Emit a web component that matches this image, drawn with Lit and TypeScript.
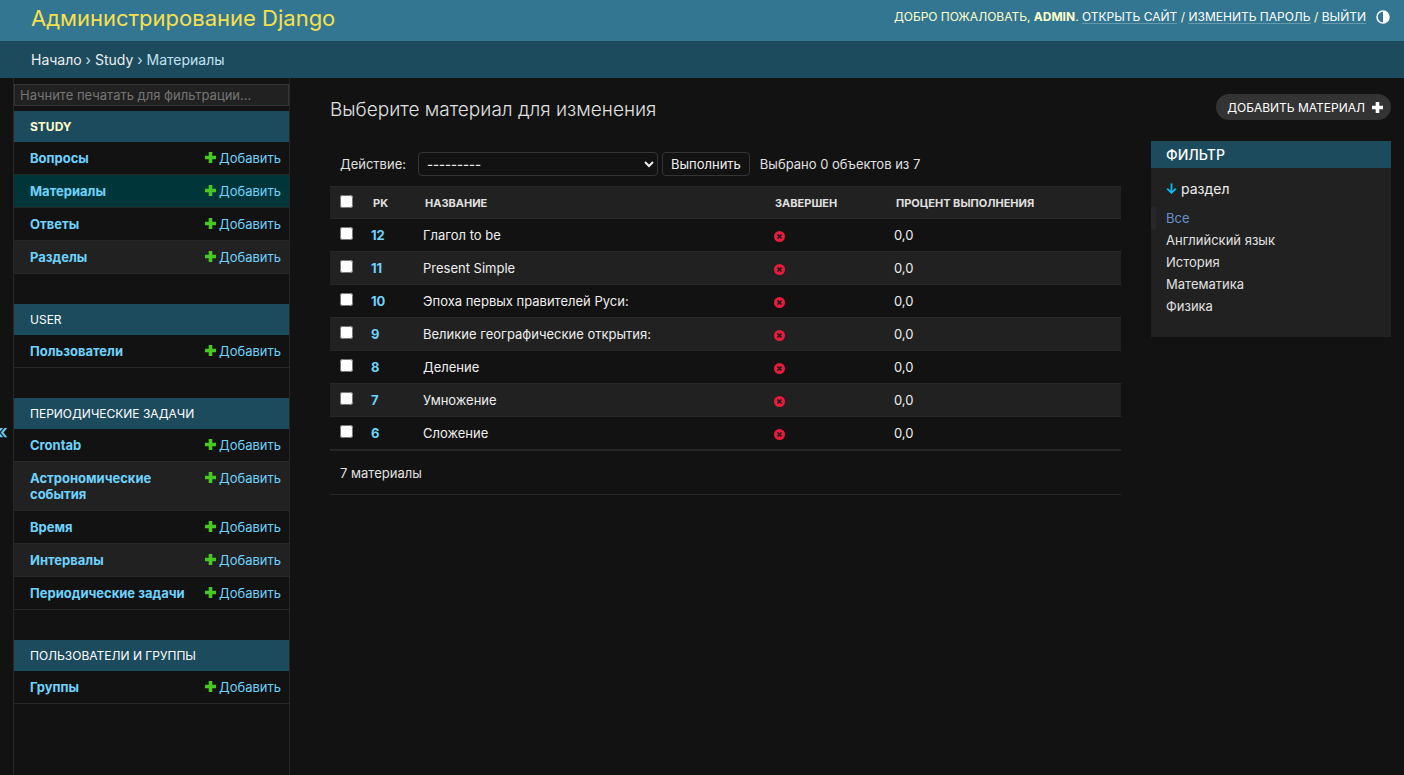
import { LitElement, html, css, svg } from "lit";
import { customElement, property } from "lit/decorators.js";
import { classMap } from "lit/directives/class-map.js";

interface Model {
  name: string;
  current?: boolean;
}

interface AppGroup {
  name: string;
  current?: boolean;
  models: Model[];
}

interface Row {
  pk: number;
  title: string;
  percent: string;
}

const GROUPS: AppGroup[] = [
  {
    name: "Study",
    current: true,
    models: [
      { name: "Вопросы" },
      { name: "Материалы", current: true },
      { name: "Ответы" },
      { name: "Разделы" },
    ],
  },
  { name: "User", models: [{ name: "Пользователи" }] },
  {
    name: "Периодические задачи",
    models: [
      { name: "Crontab" },
      { name: "Астрономические события" },
      { name: "Время" },
      { name: "Интервалы" },
      { name: "Периодические задачи" },
    ],
  },
  { name: "Пользователи и группы", models: [{ name: "Группы" }] },
];

const ROWS: Row[] = [
  { pk: 12, title: "Глагол to be", percent: "0,0" },
  { pk: 11, title: "Present Simple", percent: "0,0" },
  { pk: 10, title: "Эпоха первых правителей Руси:", percent: "0,0" },
  { pk: 9, title: "Великие географические открытия:", percent: "0,0" },
  { pk: 8, title: "Деление", percent: "0,0" },
  { pk: 7, title: "Умножение", percent: "0,0" },
  { pk: 6, title: "Сложение", percent: "0,0" },
];

const SECTIONS = ["Все", "Английский язык", "История", "Математика", "Физика"];

const plus = svg`<path d="M3.7 0h3.6v3.7H11v3.6H7.3V11H3.7V7.3H0V3.7h3.7z" fill="currentColor"/>`;

const base = css`
  :host {
    display: block;
    box-sizing: border-box;
  }
  *,
  *::before,
  *::after {
    box-sizing: border-box;
  }
  a {
    color: #6dd3fd;
    text-decoration: none;
  }
  svg {
    display: block;
    flex: none;
  }
`;

@customElement("site-header")
class SiteHeader extends LitElement {
  static styles = [
    base,
    css`
      .bar {
        display: flex;
        justify-content: space-between;
        min-height: 41px;
        padding: 0 13px 0 31px;
        background: #337691;
        color: #ffffcc;
      }
      .brand {
        margin: 0;
        padding-top: 4px;
        font-size: 22px;
        line-height: 29px;
        font-weight: 400;
      }
      .brand a {
        color: #f8e04c;
      }
      .tools {
        display: flex;
        align-items: center;
        height: 33px;
        gap: 9px;
        font-size: 12px;
        line-height: 15px;
        text-transform: uppercase;
      }
      .tools a {
        display: inline-block;
        height: 15px;
        color: #fff;
        border-bottom: 1px solid rgba(255, 255, 255, 0.25);
      }
      .theme {
        padding: 0;
        border: 0;
        background: none;
        color: #fff;
      }
      .crumbs {
        padding: 10px 31px;
        background: #1c4b5e;
        color: #c1e2f2;
        font-size: 14px;
        line-height: 17px;
      }
      .crumbs a {
        color: #eee;
      }
    `,
  ];

  render() {
    return html`
      <header class="bar">
        <h1 class="brand"><a href="#">Администрирование Django</a></h1>
        <div class="tools">
          <div>
            Добро пожаловать, <strong>admin</strong>. <a href="#">Открыть сайт</a> /
            <a href="#">Изменить пароль</a> / <a href="#">Выйти</a>
          </div>
          <button class="theme" aria-label="Переключить тему">
            <svg width="16" height="16" viewBox="0 0 16 16">
              <circle cx="8" cy="8" r="6" fill="none" stroke="currentColor" stroke-width="1.5" />
              <path d="M8 2a6 6 0 0 1 0 12z" fill="currentColor" />
            </svg>
          </button>
        </div>
      </header>
      <nav class="crumbs">
        <a href="#">Начало</a> › <a href="#">Study</a> › Материалы
      </nav>
    `;
  }
}

@customElement("nav-sidebar")
class NavSidebar extends LitElement {
  @property({ attribute: false }) groups: AppGroup[] = [];

  static styles = [
    base,
    css`
      :host {
        display: flex;
        flex: none;
        width: 290px;
      }
      .toggle {
        display: flex;
        flex: none;
        align-items: center;
        justify-content: flex-end;
        width: 14px;
        padding: 10px 5px 0 0;
        overflow: hidden;
        border: 0;
        border-right: 1px solid #272727;
        background: none;
        color: #6dd3fd;
        font: inherit;
        font-size: 20px;
        font-weight: 500;
      }
      .panel {
        flex: 1;
        padding-top: 6px;
        border-right: 1px solid #272727;
      }
      .search {
        display: block;
        width: 100%;
        height: 22px;
        margin-bottom: 5px;
        padding: 0 5px;
        border: 1px solid #353535;
        border-radius: 0;
        background: #212121;
        color: #eee;
        font: inherit;
        font-size: 13px;
      }
      .search::placeholder {
        color: #757575;
      }
      table {
        width: 100%;
        margin-bottom: 30px;
        border-collapse: collapse;
      }
      caption {
        padding: 8px 16px;
        background: #1c4b5e;
        font-size: 12px;
        line-height: 15px;
        text-align: left;
        text-transform: uppercase;
      }
      caption a {
        color: #fff;
      }
      .active caption a {
        color: #ffffcc;
        font-weight: 700;
      }
      th,
      td {
        padding: 8px;
        border-bottom: 1px solid #272727;
        font-size: 13px;
        line-height: 16px;
        vertical-align: top;
        text-align: left;
      }
      th {
        padding-left: 16px;
      }
      tr:nth-child(even) {
        background: #212121;
      }
      tr.current {
        background: #00363a;
      }
      .add {
        display: flex;
        justify-content: flex-end;
        gap: 3px;
      }
      .add svg {
        margin-top: 2px;
        color: #46c922;
      }
    `,
  ];

  render() {
    return html`
      <button class="toggle" aria-label="Скрыть навигацию">«</button>
      <nav class="panel">
        <input class="search" type="search" placeholder="Начните печатать для фильтрации..." aria-label="Фильтр навигации" />
        ${this.groups.map(
          (g) => html`
            <table class=${classMap({ active: !!g.current })}>
              <caption><a href="#">${g.name}</a></caption>
              <tbody>
                ${g.models.map(
                  (m) => html`
                    <tr class=${classMap({ current: !!m.current })}>
                      <th scope="row"><a href="#">${m.name}</a></th>
                      <td>
                        <a class="add" href="#"><svg width="11" height="11" viewBox="0 0 11 11">${plus}</svg>Добавить</a>
                      </td>
                    </tr>
                  `
                )}
              </tbody>
            </table>
          `
        )}
      </nav>
    `;
  }
}

@customElement("change-list")
class ChangeList extends LitElement {
  @property({ attribute: false }) rows: Row[] = [];

  static styles = [
    base,
    css`
      :host {
        flex: 1;
        min-width: 0;
      }
      .actions {
        display: flex;
        align-items: center;
        height: 24px;
        margin: 11px 0 10px;
        padding: 0 10px;
        gap: 4px;
        font-size: 13px;
      }
      .actions label {
        display: flex;
        align-items: center;
        gap: 12px;
      }
      select,
      .run {
        height: 24px;
        border: 1px solid #353535;
        border-radius: 4px;
        background-color: #121212;
        color: #eee;
        font: inherit;
      }
      select {
        width: 240px;
        padding: 0 4px;
        font-weight: 500;
      }
      .run {
        padding: 0 8px;
      }
      .counter {
        margin-left: 6px;
      }
      table {
        width: 100%;
        border-collapse: separate;
        border-spacing: 0;
        table-layout: fixed;
      }
      .c-check {
        width: 33px;
      }
      .c-pk {
        width: 52px;
      }
      .c-title {
        width: 350px;
      }
      .c-done {
        width: 121px;
      }
      th,
      td {
        height: 33px;
        padding: 0 8px;
        border-bottom: 1px solid #272727;
        font-size: 13px;
        line-height: 16px;
        text-align: left;
      }
      thead th {
        padding: 0 10px;
        border-top: 1px solid #272727;
        background: #212121;
        font-size: 11px;
        text-transform: uppercase;
      }
      tbody {
        color: #eee;
      }
      tbody tr:nth-child(even) {
        background: #212121;
      }
      th:first-child,
      td:first-child {
        padding: 0 10px;
      }
      input {
        display: block;
        width: 13px;
        height: 13px;
        margin: 0 0 3px;
      }
      .pager {
        margin: 0;
        padding: 14px 10px 12px;
        border-top: 1px solid #272727;
        border-bottom: 1px solid #272727;
        font-size: 13px;
        line-height: 17px;
      }
    `,
  ];

  render() {
    return html`
      <form @submit=${(e: Event) => e.preventDefault()}>
        <div class="actions">
          <label>Действие: <select><option>---------</option></select></label>
          <button class="run">Выполнить</button>
          <span class="counter">Выбрано 0 объектов из 7</span>
        </div>
        <table>
          <colgroup>
            <col class="c-check" /><col class="c-pk" /><col class="c-title" /><col class="c-done" /><col />
          </colgroup>
          <thead>
            <tr>
              <th scope="col"><input type="checkbox" aria-label="Выбрать все" /></th>
              <th scope="col">pk</th>
              <th scope="col">Название</th>
              <th scope="col">Завершен</th>
              <th scope="col">Процент выполнения</th>
            </tr>
          </thead>
          <tbody>
            ${this.rows.map(
              (r) => html`
                <tr>
                  <td><input type="checkbox" aria-label=${r.title} /></td>
                  <th scope="row"><a href="#">${r.pk}</a></th>
                  <td>${r.title}</td>
                  <td>
                    <svg width="13" height="13" viewBox="0 0 13 13" role="img" aria-label="Нет">
                      <circle cx="6.5" cy="7.5" r="5.5" fill="#e81c3a" />
                      <path d="M4.5 5.5l4 4M8.5 5.5l-4 4" stroke="#1a1a1a" stroke-width="1.7" />
                    </svg>
                  </td>
                  <td>${r.percent}</td>
                </tr>
              `
            )}
          </tbody>
        </table>
        <p class="pager">7 материалы</p>
      </form>
    `;
  }
}

@customElement("filter-panel")
class FilterPanel extends LitElement {
  @property({ attribute: false }) options: string[] = [];

  static styles = [
    base,
    css`
      :host {
        flex: none;
        width: 240px;
        padding-bottom: 20px;
        background: #212121;
      }
      h2 {
        margin: 0;
        padding: 5px 15px;
        background: #1c4b5e;
        color: #fff;
        font-size: 14px;
        line-height: 17px;
        font-weight: 500;
        text-transform: uppercase;
      }
      summary {
        display: flex;
        align-items: center;
        gap: 4px;
        padding: 12px 15px 10px;
        color: #eee;
        font-size: 14px;
        line-height: 17px;
        list-style: none;
      }
      ul {
        margin: 0;
        padding: 0 15px;
        list-style: none;
      }
      li {
        height: 22px;
        font-size: 13px;
        line-height: 22px;
      }
      li a {
        color: #e0e0e0;
      }
      .selected {
        margin-left: -15px;
        padding-left: 10px;
        border-left: 5px solid #272727;
      }
      .selected a {
        color: #6590cc;
      }
    `,
  ];

  render() {
    return html`
      <h2>Фильтр</h2>
      <details open>
        <summary>
          <svg width="11" height="11" viewBox="0 0 11 11" fill="none" stroke="#0bbcf8" stroke-width="1.8">
            <path d="M5.5 0.5v9.5M1.2 5.6l4.3 4.2 4.3-4.2" />
          </svg>
          раздел
        </summary>
        <ul>
          ${this.options.map(
            (o, i) => html`<li class=${classMap({ selected: i === 0 })}><a href="#">${o}</a></li>`
          )}
        </ul>
      </details>
    `;
  }
}

@customElement("app-root")
class AppRoot extends LitElement {
  static styles = [
    base,
    css`
      :host {
        display: flex;
        flex-direction: column;
        min-height: 100vh;
        background: #121212;
        color: #e0e0e0;
        font-family: Inter, Roboto, "Liberation Sans", sans-serif;
        font-size: 13px;
      }
      .main {
        display: flex;
        flex: 1;
      }
      .content {
        flex: 1;
        min-width: 0;
        padding: 16px 13px 40px 40px;
      }
      .head {
        display: flex;
        justify-content: space-between;
        align-items: flex-start;
        height: 47px;
      }
      h1 {
        margin: 0;
        padding-top: 4px;
        font-size: 19px;
        line-height: 24px;
        font-weight: 300;
      }
      .addlink {
        display: flex;
        align-items: center;
        gap: 7px;
        height: 26px;
        padding: 0 8px 0 11px;
        border-radius: 13px;
        background: #333;
        color: #fff;
        font-size: 12px;
        text-transform: uppercase;
      }
      .columns {
        display: flex;
        align-items: flex-start;
        gap: 30px;
      }
    `,
  ];

  render() {
    return html`
      <site-header></site-header>
      <div class="main">
        <nav-sidebar .groups=${GROUPS}></nav-sidebar>
        <main class="content">
          <div class="head">
            <h1>Выберите материал для изменения</h1>
            <a class="addlink" href="#">Добавить материал<svg width="11" height="11" viewBox="0 0 11 11">${plus}</svg></a>
          </div>
          <div class="columns">
            <change-list .rows=${ROWS}></change-list>
            <filter-panel .options=${SECTIONS}></filter-panel>
          </div>
        </main>
      </div>
    `;
  }
}
